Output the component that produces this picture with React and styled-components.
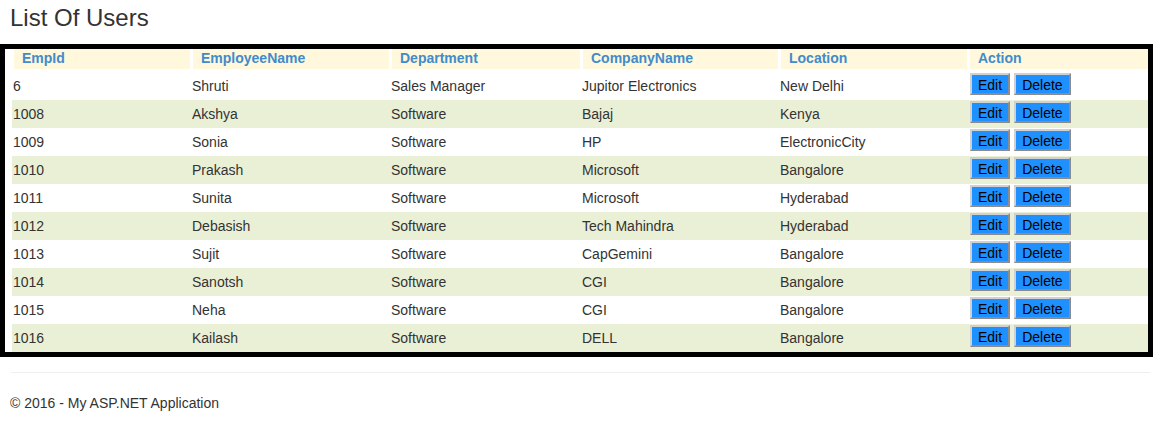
import React from "react";
import styled, { createGlobalStyle } from "styled-components";

const GlobalStyle = createGlobalStyle`
  html, body {
    margin: 0;
    padding: 0;
    background: #fff;
  }
  body {
    font-family: "Liberation Sans", Arial, Helvetica, sans-serif;
    font-size: 14px;
    line-height: 20px;
    color: #333;
  }
`;

const Page = styled.div`
  width: 1156px;
`;

const Title = styled.h2`
  margin: 0 0 13px 10px;
  padding-top: 5px;
  font-size: 24px;
  line-height: 26px;
  font-weight: 400;
  color: #333;
`;

const Frame = styled.div`
  width: 1153px;
  box-sizing: border-box;
  border: 5px solid #000;
  padding-left: 7px;
`;

const Table = styled.table`
  width: 1136px;
  table-layout: fixed;
  border-collapse: separate;
  border-spacing: 0;
`;

const HeadCell = styled.th`
  height: 16px;
  padding: 1px 0 3px 8px;
  line-height: 16px;
  text-align: left;
  font-weight: 700;
  color: #428bca;
  background: #fff8dc;
  border-left: ${(p) => (p.$first ? "2px" : "3px")} solid #fff;
  border-bottom: 3px solid #fff;
  white-space: nowrap;
`;

const Row = styled.tr`
  background: ${(p) => (p.$alt ? "#eaf0d6" : "#fff")};
`;

const Cell = styled.td`
  box-sizing: border-box;
  height: 28px;
  padding: 0 0 0 ${(p) => (p.$first ? "1px" : "2px")};
  vertical-align: middle;
  white-space: nowrap;
`;

const ActionCell = styled.td`
  box-sizing: border-box;
  height: 28px;
  padding: 1px 0 0 3px;
  vertical-align: top;
  white-space: nowrap;
`;

const ActionButton = styled.button`
  font-family: inherit;
  font-size: 14px;
  line-height: 15px;
  padding: 3px 6px 0;
  margin: 0 4px 0 0;
  color: #000;
  background: #1e90ff;
  border-width: 2px;
  border-style: solid;
  border-color: #d0d0d0 #8c8c8c #8c8c8c #d0d0d0;
  border-radius: 0;
  cursor: pointer;
  vertical-align: top;
`;

const Rule = styled.hr`
  margin: 15px 0 20px 11px;
  width: 1139px;
  border: 0;
  border-top: 1px solid #eee;
  height: 0;
`;

const Footer = styled.footer`
  margin-left: 10px;
  font-size: 14px;
  line-height: 20px;
  color: #333;
`;

const columns = [
  { key: "id", label: "EmpId", width: 178 },
  { key: "name", label: "EmployeeName", width: 199 },
  { key: "dept", label: "Department", width: 191 },
  { key: "company", label: "CompanyName", width: 198 },
  { key: "location", label: "Location", width: 189 },
];

const users = [
  { id: "6", name: "Shruti", dept: "Sales Manager", company: "Jupitor Electronics", location: "New Delhi" },
  { id: "1008", name: "Akshya", dept: "Software", company: "Bajaj", location: "Kenya" },
  { id: "1009", name: "Sonia", dept: "Software", company: "HP", location: "ElectronicCity" },
  { id: "1010", name: "Prakash", dept: "Software", company: "Microsoft", location: "Bangalore" },
  { id: "1011", name: "Sunita", dept: "Software", company: "Microsoft", location: "Hyderabad" },
  { id: "1012", name: "Debasish", dept: "Software", company: "Tech Mahindra", location: "Hyderabad" },
  { id: "1013", name: "Sujit", dept: "Software", company: "CapGemini", location: "Bangalore" },
  { id: "1014", name: "Sanotsh", dept: "Software", company: "CGI", location: "Bangalore" },
  { id: "1015", name: "Neha", dept: "Software", company: "CGI", location: "Bangalore" },
  { id: "1016", name: "Kailash", dept: "Software", company: "DELL", location: "Bangalore" },
];

export default function App() {
  return (
    <Page>
      <GlobalStyle />
      <Title>List Of Users</Title>
      <Frame>
        <Table>
          <colgroup>
            {columns.map((c) => (
              <col key={c.key} style={{ width: c.width }} />
            ))}
            <col style={{ width: 181 }} />
          </colgroup>
          <thead>
            <tr>
              {columns.map((c, i) => (
                <HeadCell key={c.key} $first={i === 0}>
                  {c.label}
                </HeadCell>
              ))}
              <HeadCell>Action</HeadCell>
            </tr>
          </thead>
          <tbody>
            {users.map((u, r) => (
              <Row key={u.id} $alt={r % 2 === 1}>
                {columns.map((c, i) => (
                  <Cell key={c.key} $first={i === 0}>
                    {u[c.key]}
                  </Cell>
                ))}
                <ActionCell>
                  <ActionButton type="button">Edit</ActionButton>
                  <ActionButton type="button">Delete</ActionButton>
                </ActionCell>
              </Row>
            ))}
          </tbody>
        </Table>
      </Frame>
      <Rule />
      <Footer>© 2016 - My ASP.NET Application</Footer>
    </Page>
  );
}
